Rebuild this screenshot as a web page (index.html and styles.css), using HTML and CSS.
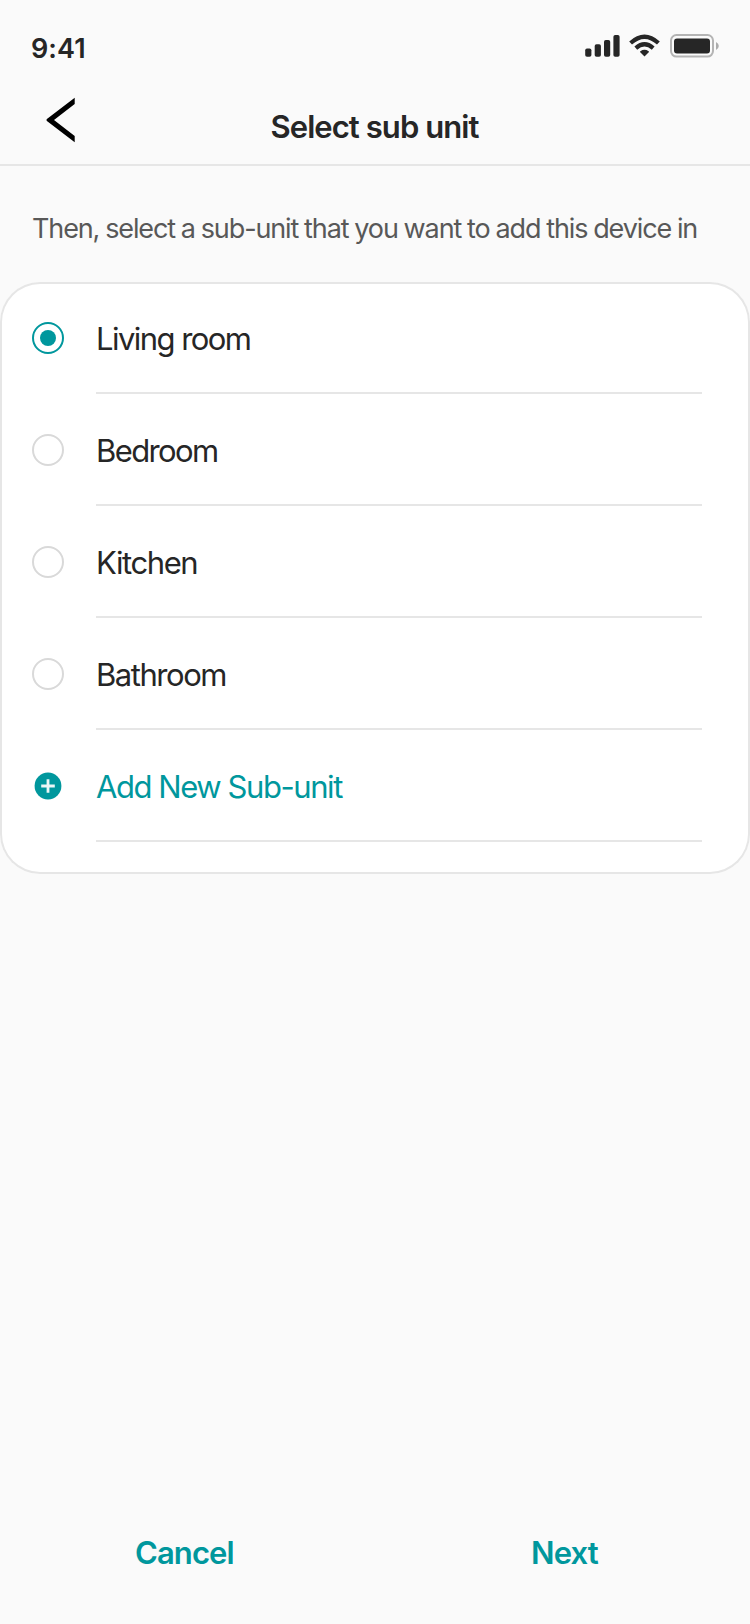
FILE: index.html
```html
<!DOCTYPE html>
<html lang="en">
<head>
<meta charset="utf-8">
<title>Select sub unit</title>
<link rel="stylesheet" href="styles.css">
</head>
<body>
<main class="screen">
  <div class="status">
    <span class="time">9:41</span>
    <svg class="status-icons" width="136" height="28" viewBox="584 32 136 28">
      <g fill="#262626">
        <rect x="585.2" y="48.5" width="6.2" height="8.2" rx="1.8"/>
        <rect x="594.7" y="44.3" width="6.2" height="12.4" rx="1.8"/>
        <rect x="604" y="40" width="6.2" height="16.7" rx="1.8"/>
        <rect x="613.4" y="35" width="6.2" height="21.7" rx="1.8"/>
        <path d="M644.5 56.6 L640 52.1 Q640 51.6 640.4 51.3 Q644.5 48.4 648.6 51.3 Q649 51.6 649 52.1 Z"/>
      </g>
      <g fill="none" stroke="#262626" stroke-width="4.2">
        <path d="M630.6 43 Q644.5 30.4 658.4 43"/>
        <path d="M635.8 48.1 Q644.5 40.4 653.2 48.1"/>
      </g>
      <rect x="671" y="35" width="42" height="21.6" rx="5.5" fill="none" stroke="#b4b4b4" stroke-width="2"/>
      <rect x="674" y="38.4" width="36" height="15" rx="3" fill="#262626"/>
      <path d="M716 42 Q718.8 43.3 718.8 46 Q718.8 48.7 716 50 Z" fill="#acacac"/>
    </svg>
  </div>
  <header class="header">
    <svg class="back" width="30" height="46" viewBox="45 97 30 46">
      <path d="M74.7 97.7 V104 L54 120 L74.7 136 V142.2 L46.9 120.9 Q45.9 119.9 46.9 119 Z" fill="#000"/>
    </svg>
    <h1 class="title">Select sub unit</h1>
  </header>
  <p class="hint">Then, select a sub-unit that you want to add this device in</p>
  <section class="card">
    <div class="row"><i class="radio checked"></i><span class="label living">Living room</span></div>
    <div class="row"><i class="radio"></i><span class="label bedroom">Bedroom</span></div>
    <div class="row"><i class="radio"></i><span class="label kitchen">Kitchen</span></div>
    <div class="row"><i class="radio"></i><span class="label bathroom">Bathroom</span></div>
    <div class="row">
      <svg class="plus" width="32" height="32" viewBox="0 0 32 32"><circle cx="16" cy="16" r="13.4" fill="#00979d"/><path d="M16 9.2V22.8M9.2 16H22.8" stroke="#fff" stroke-opacity=".92" stroke-width="2.8"/></svg>
      <span class="label add">Add New Sub-unit</span>
    </div>
  </section>
  <footer class="actions">
    <span class="action cancel">Cancel</span>
    <span class="action next">Next</span>
  </footer>
</main>
</body>
</html>
```
FILE: styles.css
```css
* { box-sizing: border-box; }
body { margin: 0; background: #fafafa; }
.screen {
  width: 750px; height: 1624px; display: flex; flex-direction: column;
  background: #fafafa; color: #262626; font-family: Inter, sans-serif;
}
.status { height: 88px; padding: 32px 30px 0 31px; display: flex; justify-content: space-between; align-items: flex-start; }
.time { margin-top: 1px; font-size: 27px; font-weight: 600; line-height: 32px; letter-spacing: 0.1px; }
.status-icons { display: block; }
.header {
  height: 78px; padding: 9px 45px 0; border-bottom: 2px solid #e6e6e6;
  display: grid; grid-template-columns: 30px 1fr 30px; align-items: start;
}
.back { display: block; }
.title { margin: 14px 0 0; padding-right: 1px; font-size: 31px; font-weight: 600; line-height: 32px; text-align: center; letter-spacing: -0.93px; }
.hint { margin: 0; padding: 43px 0 0 32px; height: 116px; font-size: 27px; line-height: 40px; color: #585858; letter-spacing: -1.12px; word-spacing: -0.6px; white-space: nowrap; }
.card { height: 592px; border-radius: 40px; background: #fff; box-shadow: inset 0 0 0 2px #e6e6e6; padding: 0 48px 32px 32px; }
.row { height: 112px; display: grid; grid-template-columns: 64px 1fr; align-items: stretch; }
.radio { width: 32px; height: 32px; margin-top: 40px; border: 2px solid #d9d9d9; border-radius: 50%; display: grid; place-items: center; }
.checked { border-color: #00979d; }
.checked::after { content: ""; width: 16px; height: 16px; border-radius: 50%; background: #00979d; }
.plus { display: block; margin-top: 40px; }
.label { font-size: 31px; line-height: 32px; padding-top: 41px; border-bottom: 2px solid #e6e6e6; white-space: nowrap; }
.living { letter-spacing: -1.55px; }
.bedroom { letter-spacing: -1.6px; }
.kitchen { letter-spacing: -1.4px; }
.bathroom { letter-spacing: -1.45px; }
.add { color: #00979d; letter-spacing: -1.43px; }
.actions { margin-top: auto; height: 87px; padding: 0 30px 0 0; display: grid; grid-template-columns: 1fr 1fr; color: #00979d; }
.action { font-size: 31px; font-weight: 600; line-height: 32px; letter-spacing: -0.9px; }
.cancel { padding-left: 135px; }
.next { padding-left: 171px; }
```
